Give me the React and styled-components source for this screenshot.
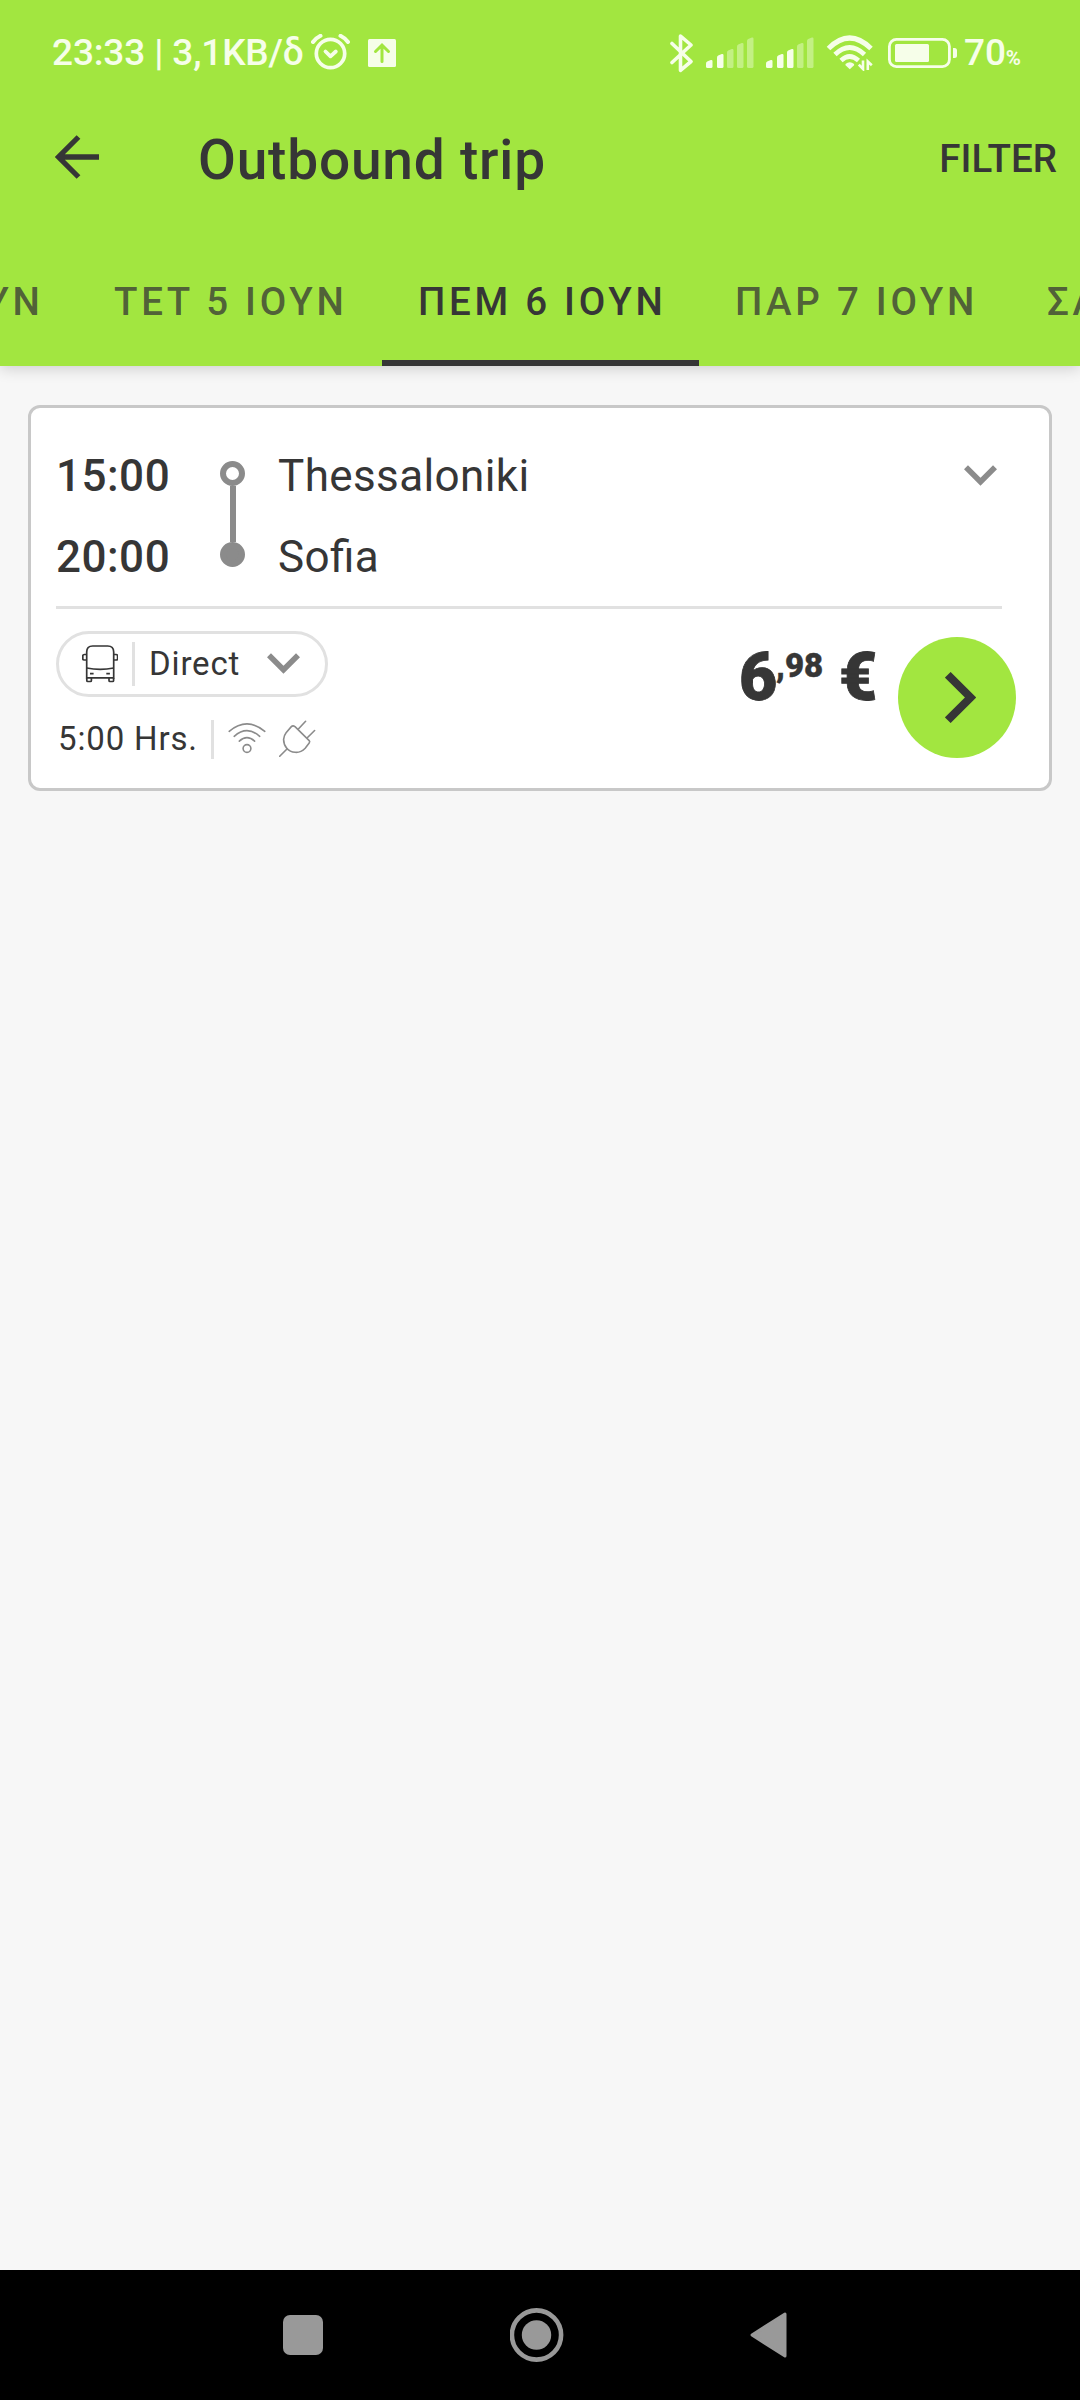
import React from "react";
import styled, { createGlobalStyle } from "styled-components";

const GlobalStyle = createGlobalStyle`
  html, body { margin: 0; padding: 0; background: #f7f7f7; }
  * { box-sizing: border-box; }
  svg { display: block; flex: none; }
`;

const GREEN = "#a2e640";
const INK = "#363636";
const GREY = "#8b8b8b";
const LINE = "#e1e1e1";
const SNOW = "#f6fee9";

const Screen = styled.div`
  width: 1080px;
  height: 2400px;
  display: flex;
  flex-direction: column;
  overflow: hidden;
  background: #f7f7f7;
  color: ${INK};
  font-family: Roboto, "Noto Sans", sans-serif;
`;

const Header = styled.header`
  height: 366px;
  flex: none;
  display: flex;
  flex-direction: column;
  background: ${GREEN};
  box-shadow: 0 3px 14px rgba(0, 0, 0, 0.16);
`;

const StatusBar = styled.div`
  height: 105px;
  margin-bottom: 2px;
  padding: 0 58px 0 52px;
  display: flex;
  align-items: center;
  color: ${SNOW};
  white-space: nowrap;
`;

const StatusText = styled.span`
  width: ${(p) => p.$width}px;
  flex: none;
  font-size: 37px;
  line-height: 105px;
  font-weight: 500;
  letter-spacing: -0.15px;
`;

const Percent = styled.span`
  font-size: 20.5px;
  line-height: 1;
  font-weight: 700;
`;

const StatusIcons = styled.div`
  display: flex;
  align-items: center;
  gap: ${(p) => p.$gap}px;
`;

const SystemIcons = styled(StatusIcons)`
  margin-left: auto;
`;

const Battery = styled.div`
  margin-left: 3px;
  display: flex;
  align-items: center;
  gap: 7px;
`;

const Toolbar = styled.div`
  height: 106px;
  margin-bottom: 25px;
  padding: 0 23px 0 55px;
  display: flex;
  align-items: center;
`;

const BackButton = styled.div`
  width: 143px;
  padding-bottom: 6px;
`;

const Title = styled.h1`
  margin: 0;
  font-size: 55px;
  line-height: 106px;
  font-weight: 500;
  letter-spacing: 0.8px;
`;

const FilterButton = styled.div`
  margin-left: auto;
  font-size: 38.5px;
  line-height: 104px;
  height: 106px;
  font-weight: 500;
`;

const Tabs = styled.nav`
  height: 128px;
  margin-left: -217px;
  display: flex;
`;

const Tab = styled.div`
  width: ${(p) => p.$width}px;
  flex: none;
  padding-left: 36px;
  font-size: 38.5px;
  line-height: 128px;
  font-weight: 500;
  letter-spacing: 3.72px;
  white-space: nowrap;
  color: ${(p) => (p.$active ? INK : "rgba(54, 54, 54, 0.77)")};
  box-shadow: ${(p) => (p.$active ? `inset 0 -6px 0 ${INK}` : "none")};
`;

const Main = styled.main`
  flex: 1;
  padding: 39px 28px 0;
`;

const Card = styled.section`
  height: 386px;
  padding: 28px 33px 0 25px;
  display: flex;
  flex-direction: column;
  background: #fff;
  border: 3px solid #c8c8c8;
  border-radius: 12px;
`;

const Itinerary = styled.div`
  height: 173px;
  padding-right: 19px;
  display: flex;
  align-items: flex-start;
`;

const Stops = styled.div`
  width: ${(p) => p.$width}px;
  display: flex;
  flex-direction: column;
  font-size: 44px;
  line-height: 81px;
  font-weight: ${(p) => p.$weight};
  letter-spacing: ${(p) => p.$spacing}px;
  font-feature-settings: "liga" 1;
`;

const Track = styled.div`
  width: 25px;
  height: 106px;
  margin: 25px 33px 0 0;
  display: flex;
  flex-direction: column;
  align-items: center;
`;

const Dot = styled.div`
  width: 25px;
  height: 25px;
  flex: none;
  border: 6px solid ${GREY};
  border-radius: 50%;
  background: ${(p) => (p.$filled ? GREY : "#fff")};
`;

const Rail = styled.div`
  flex: 1;
  width: 6px;
  background: ${GREY};
`;

const Expand = styled.div`
  margin: 29px 0 0 auto;
`;

const Rule = styled.hr`
  width: 946px;
  height: 3px;
  flex: none;
  margin: -3px 0 0;
  border: 0;
  background: ${LINE};
`;

const Footer = styled.div`
  display: flex;
  align-items: flex-start;
`;

const Details = styled.div`
  padding-top: 22px;
  display: flex;
  flex-direction: column;
`;

const Pill = styled.div`
  width: 272px;
  height: 66px;
  padding: 0 25px 0 23px;
  display: flex;
  align-items: center;
  border: 3px solid ${LINE};
  border-radius: 33px;
`;

const Separator = styled.div`
  width: 3px;
  height: ${(p) => p.$height}px;
  margin: 0 13px 0 14px;
  flex: none;
  background: ${LINE};
`;

const Label = styled.span`
  width: ${(p) => p.$width}px;
  padding-left: 1px;
  flex: none;
  font-size: 33px;
  line-height: 60px;
  letter-spacing: 0.85px;
  white-space: nowrap;
`;

const PillEnd = styled.div`
  margin-left: auto;
  padding-bottom: 2px;
`;

const Amenities = styled.div`
  height: 42px;
  margin-top: 21px;
  padding-left: 1px;
  display: flex;
  align-items: center;
`;

const AmenityIcons = styled.div`
  margin: 0 0 2px 1px;
  display: flex;
  align-items: center;
  gap: 13px;
`;

const Price = styled.div`
  margin: 26px 0 0 auto;
  width: 159px;
  flex: none;
  display: flex;
  align-items: flex-start;
  font-size: 66px;
  line-height: 86px;
  font-weight: 900;
  -webkit-text-stroke: 0.8px ${INK};
`;

const Whole = styled.span`
  width: 37px;
`;

const Cents = styled.span`
  width: 63px;
  font-size: 33px;
  line-height: 61px;
  -webkit-text-stroke-width: 0.4px;
`;

const GoButton = styled.div`
  width: 118px;
  height: 121px;
  margin: 28px 0 0;
  flex: none;
  display: flex;
  align-items: center;
  justify-content: center;
  padding-left: 6px;
  border-radius: 50%;
  background: ${GREEN};
`;

const NavBar = styled.footer`
  height: 130px;
  flex: none;
  padding: 0 293px 0 283px;
  display: flex;
  align-items: center;
  justify-content: space-between;
  background: #000;
`;

const AlarmIcon = () => (
  <svg width="40" height="38" viewBox="311 34 40 38" fill="none" stroke={SNOW} strokeLinecap="round" strokeLinejoin="round">
    <circle cx="330.500" cy="53.500" r="14.200" strokeWidth="3.700" />
    <path d="M325.500 51.500l5 4.800 5.300-4.800" strokeWidth="3.800" />
    <path d="M313 42q3-4 7.500-6.200M348 42q-3-4-7.500-6.200" strokeWidth="4" />
  </svg>
);

const UploadIcon = () => (
  <svg width="28" height="28" viewBox="0 0 28 28">
    <rect width="28" height="28" rx="1.500" fill={SNOW} />
    <path d="M14 22.500V7M7.500 12.500L14 6.200l6.500 6.300" fill="none" stroke={GREEN} strokeWidth="3" strokeLinecap="round" />
  </svg>
);

const BluetoothIcon = () => (
  <svg width="24" height="40" viewBox="669 32 24 40" fill="none" stroke={SNOW} strokeWidth="3.600" strokeLinejoin="round" strokeLinecap="round">
    <path d="M671 42.500l19 18-10.500 8.800V35l10.500 9-19 17.500" />
  </svg>
);

const BARS = [
  [0, 8],
  [11, 14],
  [21, 19],
  [31, 25],
  [41, 30.5],
];

const SignalIcon = ({ lit }) => (
  <svg width="48" height="31" viewBox="0 0 48 31">
    {BARS.map(([x, h], i) => (
      <path
        key={x}
        d={`M${x} 29.500V${34.5 - h}q0-1.200 1.200-1.900l3.600-1.500q1.700-.5 1.700 1.100V29.500q0 1.500-1.500 1.500h-3.500q-1.500 0-1.500-1.500z`}
        fill={SNOW}
        opacity={i < lit ? 1 : 0.4}
      />
    ))}
  </svg>
);

const StatusWifiIcon = () => (
  <svg width="47" height="36" viewBox="826 35 47 36" fill="none" stroke={SNOW}>
    <path d="M828.500 48.500Q849.500 27.500 871 48.500" strokeWidth="5" />
    <path d="M835 54.500Q849.500 40.500 864.500 54.500" strokeWidth="4.800" />
    <path d="M841 60.500Q849.500 52.500 858.500 60.500" strokeWidth="4.600" />
    <path d="M845.500 64q4.300-3.500 8.600 0v1.300l-4.300 4-4.300-4z" fill={SNOW} stroke="none" />
    <path d="M863 60.500V69l-4.200-4.300M867.800 70V61.500l4 3.800" strokeWidth="2.600" />
  </svg>
);

const BatteryIcon = () => (
  <svg width="69" height="30" viewBox="888 37 69 30">
    <rect x="889.400" y="38.400" width="60" height="27.200" rx="7" fill="none" stroke={SNOW} strokeWidth="2.800" />
    <rect x="895" y="43" width="34" height="18" rx="1.500" fill={SNOW} />
    <path d="M953 47h1.500q2.500 0 2.500 2.500v5q0 2.500-2.500 2.500H953z" fill={SNOW} />
  </svg>
);

const BackArrow = () => (
  <svg width="44" height="44" viewBox="0 0 44 44" fill="none" stroke={INK} strokeWidth="5.300">
    <path d="M44 22H4M23.500 2L3.500 22l20 20" />
  </svg>
);

const ChevronDown = () => (
  <svg width="33" height="21" viewBox="0 0 33 21" fill="none" stroke={GREY} strokeWidth="5.600">
    <path d="M2 2.200L16.500 16.700 31 2.200" />
  </svg>
);

const BusIcon = () => (
  <svg width="36" height="38" viewBox="82 645 36 38" fill="none" stroke={INK} strokeWidth="1.700">
    <path d="M86.700 677.800V652q0-6 6-6h15q6 0 6 6v25.800z" />
    <path d="M86.700 668q13.500 2.800 27 0" />
    <path d="M86.500 654.500h-2.200q-1.500 0-1.500 1.500v3q0 1 1.500 1h2.200M113.900 654.500h2.200q1.500 0 1.500 1.500v3q0 1-1.500 1h-2.200" />
    <path d="M86.800 678v2.500q0 1 1 1h2.600q1 0 1-1V678M109 678v2.500q0 1 1 1h2.600q1 0 1-1V678" />
    <path d="M90 673.700h3.600M106.300 673.700h3.600" />
  </svg>
);

const WifiIcon = () => (
  <svg width="38" height="32" viewBox="228 723 38 32" fill="none" stroke={GREY} strokeWidth="1.600" strokeLinecap="round">
    <path d="M229.200 732.300Q247 717.500 264.800 732.300" />
    <path d="M234.200 737.300Q247 726 259.700 737.300" />
    <path d="M239.300 742.200Q247 735.200 254.600 742.200" />
    <circle cx="247" cy="749.500" r="3.900" />
  </svg>
);

const PlugIcon = () => (
  <svg width="37" height="37" viewBox="279 720 37 37" fill="none" stroke={GREY} strokeWidth="1.600" strokeLinecap="round">
    <path d="M279.700 756.300l7.500-7.600M298.600 728.800l7-7.500M307.300 737.700l7.300-7.200" />
    <path d="M295 726.600l14.200 14q1 1 0 2.300l-4 5.300q-4.500 4.600-10 4.100-5.500-.6-8.300-3.900-3.300-4-3.300-9 .3-4 2.500-6.700l5-5.800q1.700-1.800 3.900-.3z" />
  </svg>
);

const ChevronRight = () => (
  <svg width="31" height="51" viewBox="0 0 31 51" fill="none" stroke={INK} strokeWidth="8">
    <path d="M2.800 2.800l22.700 22.700L2.800 48.200" />
  </svg>
);

const RecentsIcon = () => (
  <svg width="40" height="40" viewBox="0 0 40 40">
    <rect width="40" height="40" rx="7" fill="#999" />
  </svg>
);

const HomeIcon = () => (
  <svg width="54" height="54" viewBox="0 0 54 54">
    <circle cx="26.500" cy="27" r="24.600" fill="none" stroke="#999" strokeWidth="4.600" />
    <circle cx="26.500" cy="27" r="14.700" fill="#999" />
  </svg>
);

const NavBackIcon = () => (
  <svg width="37" height="46" viewBox="0 0 37 46">
    <path d="M2 23L35 2v42z" fill="#999" stroke="#999" strokeWidth="3" strokeLinejoin="round" />
  </svg>
);

const TABS = [
  { label: "ΤΡΙ 4 ΙΟΥΝ", width: 295 },
  { label: "ΤΕΤ 5 ΙΟΥΝ", width: 304 },
  { label: "ΠΕΜ 6 ΙΟΥΝ", width: 317, active: true },
  { label: "ΠΑΡ 7 ΙΟΥΝ", width: 312 },
  { label: "ΣΑΒ 8 ΙΟΥΝ", width: 312 },
];

export default function App() {
  return (
    <Screen>
      <GlobalStyle />
      <Header>
        <StatusBar>
          <StatusText $width={259}>23:33 | 3,1KB/δ</StatusText>
          <StatusIcons $gap={17}>
            <AlarmIcon />
            <UploadIcon />
          </StatusIcons>
          <SystemIcons $gap={12}>
            <BluetoothIcon />
            <SignalIcon lit={2} />
            <SignalIcon lit={3} />
            <StatusWifiIcon />
            <Battery>
              <BatteryIcon />
              <StatusText $width={58}>
                70<Percent>%</Percent>
              </StatusText>
            </Battery>
          </SystemIcons>
        </StatusBar>
        <Toolbar>
          <BackButton>
            <BackArrow />
          </BackButton>
          <Title>Outbound trip</Title>
          <FilterButton>FILTER</FilterButton>
        </Toolbar>
        <Tabs>
          {TABS.map((t) => (
            <Tab key={t.label} $width={t.width} $active={t.active}>
              {t.label}
            </Tab>
          ))}
        </Tabs>
      </Header>
      <Main>
        <Card>
          <Itinerary>
            <Stops $width={164} $weight={500} $spacing={0.5}>
              <span>15:00</span>
              <span>20:00</span>
            </Stops>
            <Track>
              <Dot />
              <Rail />
              <Dot $filled />
            </Track>
            <Stops $width={400} $weight={400} $spacing={0.38}>
              <span>Thessaloniki</span>
              <span>Sofia</span>
            </Stops>
            <Expand>
              <ChevronDown />
            </Expand>
          </Itinerary>
          <Rule />
          <Footer>
            <Details>
              <Pill>
                <BusIcon />
                <Separator $height={44} />
                <Label $width={92}>Direct</Label>
                <PillEnd>
                  <ChevronDown />
                </PillEnd>
              </Pill>
              <Amenities>
                <Label $width={140}>5:00 Hrs.</Label>
                <Separator $height={39} />
                <AmenityIcons>
                  <WifiIcon />
                  <PlugIcon />
                </AmenityIcons>
              </Amenities>
            </Details>
            <Price>
              <Whole>6</Whole>
              <Cents>,98</Cents>
              <span>€</span>
            </Price>
            <GoButton>
              <ChevronRight />
            </GoButton>
          </Footer>
        </Card>
      </Main>
      <NavBar>
        <RecentsIcon />
        <HomeIcon />
        <NavBackIcon />
      </NavBar>
    </Screen>
  );
}
